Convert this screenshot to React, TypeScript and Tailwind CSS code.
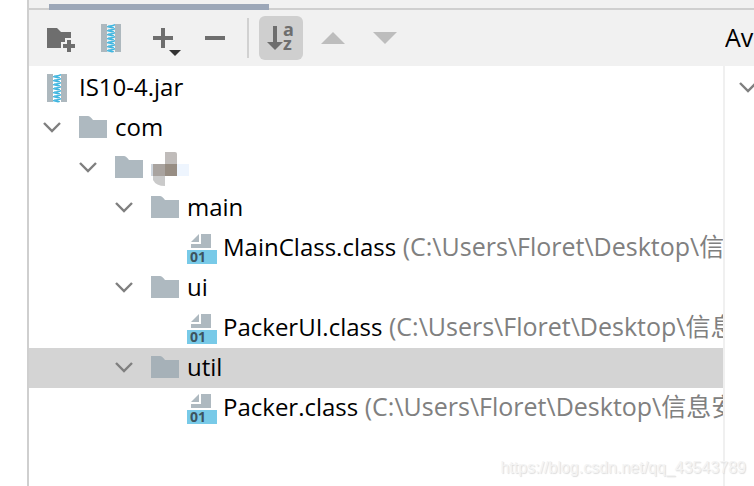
import type { ReactNode } from "react";

type IconName = "jar" | "folder" | "class";

interface TreeRow {
  depth: number;
  icon: IconName;
  name: string;
  path?: string;
  open?: boolean;
  masked?: boolean;
  selected?: boolean;
}

const rows: TreeRow[] = [
  { depth: 0, icon: "jar", name: "IS10-4.jar" },
  { depth: 0, icon: "folder", name: "com", open: true },
  { depth: 1, icon: "folder", name: "package", open: true, masked: true },
  { depth: 2, icon: "folder", name: "main", open: true },
  { depth: 4, icon: "class", name: "MainClass.class", path: "(C:\\Users\\Floret\\Desktop\\信息" },
  { depth: 2, icon: "folder", name: "ui", open: true },
  { depth: 4, icon: "class", name: "PackerUI.class", path: "(C:\\Users\\Floret\\Desktop\\信息" },
  { depth: 2, icon: "folder", name: "util", open: true, selected: true },
  { depth: 4, icon: "class", name: "Packer.class", path: "(C:\\Users\\Floret\\Desktop\\信息安" },
];

const zipperTeeth = [0, 4, 8, 12, 16, 20, 24];

function Icon({ children }: { children: ReactNode }) {
  return (
    <svg className="h-8 w-8 shrink-0 overflow-visible" viewBox="0 0 32 32" aria-hidden="true">
      {children}
    </svg>
  );
}

function JarShape({ x }: { x: number }) {
  return (
    <g transform={`translate(${x} 2)`}>
      <path d="M0 0h6v28H0zM14 0h6v28h-6z" fill="#adb8be" />
      {zipperTeeth.map((y) => (
        <g key={y} fill="#40b6e0">
          <path d={`M14 ${y}v1.6l-4 1.4-3-.6v-1l4-.4z`} />
          <path d={`M6 ${y + 2}l4 .4 3 .8v.8l-2 .4-5-1.2z`} />
        </g>
      ))}
    </g>
  );
}

function RowIcon({ name }: { name: IconName }) {
  if (name === "jar") {
    return (
      <Icon>
        <JarShape x={4} />
      </Icon>
    );
  }
  if (name === "folder") {
    return (
      <Icon>
        <path d="M0 4h9q2 0 5 4h14v18H0z" fill="#9aa7b0" fillOpacity="0.8" />
      </Icon>
    );
  }
  return (
    <Icon>
      <path d="M4 10l8-8v8zM14 2h10v14H4v-4h10z" fill="#aeb9c0" />
      <path d="M0 18h30v14H0z" fill="#78cae8" />
      <text x="3" y="30" className="font-['Open_Sans'] text-[14px] font-bold" fill="#3d5560">
        01
      </text>
    </Icon>
  );
}

function Chevron() {
  return (
    <svg className="h-5 w-5" viewBox="0 0 20 20" fill="none" stroke="#7f7f7f" strokeWidth="2.4" aria-hidden="true">
      <path d="M1 5l8 8 8-8" />
    </svg>
  );
}

function ToolButton({ label, active, children }: { label: string; active?: boolean; children: ReactNode }) {
  return (
    <button
      type="button"
      aria-label={label}
      aria-pressed={active}
      className={`flex h-11 w-11 shrink-0 items-center justify-center rounded-md ${active ? "bg-[#cfcfcf]" : ""}`}
    >
      <Icon>{children}</Icon>
    </button>
  );
}

function Toolbar() {
  return (
    <div className="flex h-14 items-center justify-between bg-[#f1f1f1] pl-2">
      <div className="flex items-center gap-2">
        <ToolButton label="New folder">
          <path d="M4 6h10l4 4h10v6h-6v4h-4v6H4z" fill="#6e6e6e" />
          <path d="M24 18h4v4h4v4h-4v4h-4v-4h-4v-4h4z" fill="#6e6e6e" />
        </ToolButton>
        <ToolButton label="New archive">
          <JarShape x={6} />
        </ToolButton>
        <ToolButton label="Add">
          <path d="M14 6h4v8h8v4h-8v8h-4v-8H6v-4h8z" fill="#6e6e6e" />
          <path d="M22 28h12l-6 6z" fill="#333" />
        </ToolButton>
        <ToolButton label="Remove">
          <path d="M6 14h20v4H6z" fill="#6e6e6e" />
        </ToolButton>
        <div className="mx-0.5 h-10 w-0.5 bg-[#d1d1d1]" />
        <ToolButton label="Sort by name" active>
          <path d="M8 4h4v16h6l-8 8-8-8h6z" fill="#6e6e6e" />
          <text x="18" y="14" className="font-['Open_Sans'] text-[18px] font-bold" fill="#6e6e6e">
            a
          </text>
          <text x="18" y="28" className="font-['Open_Sans'] text-[18px] font-bold" fill="#6e6e6e">
            z
          </text>
        </ToolButton>
        <ToolButton label="Move up">
          <path d="M4 22l12-12 12 12z" fill="#bdbdbd" />
        </ToolButton>
        <ToolButton label="Move down">
          <path d="M4 10h24l-12 12z" fill="#bdbdbd" />
        </ToolButton>
      </div>
      <h2 className="w-[29px] overflow-hidden pb-0.5 text-[25px] whitespace-nowrap">Av</h2>
    </div>
  );
}

function Row({ row }: { row: TreeRow }) {
  return (
    <li
      role="treeitem"
      aria-expanded={row.open}
      aria-selected={row.selected ?? false}
      className={`flex h-10 items-center overflow-hidden whitespace-nowrap ${row.selected ? "bg-[#d4d4d4]" : ""}`}
      style={{ paddingLeft: 14 + row.depth * 36 }}
    >
      {row.open && (
        <button type="button" aria-label={`Collapse ${row.name}`} className="w-9 shrink-0">
          <Chevron />
        </button>
      )}
      <RowIcon name={row.icon} />
      {row.masked ? (
        <svg className="ml-1 h-9 w-10" viewBox="0 0 40 36" aria-hidden="true">
          <path d="M14 2h10q2 0 2 2v10H14z" fill="#c0bcba" />
          <path d="M0 14h2v12H0z" fill="#cfd6de" />
          <path d="M2 14h12v12H2z" fill="#a9a39f" />
          <path d="M14 14h12v12H14z" fill="#978d83" />
          <path d="M26 14h12v12H26z" fill="#eef5fe" />
          <path d="M2 26h12v10q-9 0-12-6z" fill="#cacaca" />
        </svg>
      ) : (
        <span className="ml-1 pb-0.5">
          {row.name}
          {row.path && <span className="text-[25px] leading-none text-[#808080]"> {row.path}</span>}
        </span>
      )}
    </li>
  );
}

export default function App() {
  return (
    <div className="relative flex min-h-screen overflow-hidden bg-white pl-[27px] font-['Open_Sans','Noto_Sans_CJK_SC',sans-serif] text-[24px] leading-8 text-black">
      <div className="flex min-w-0 flex-1 flex-col border-l-2 border-[#cfcfcf]">
        <div className="grid h-2.5 shrink-0 bg-[#f1f1f1]">
          <div className="col-start-1 row-start-1 border-b-2 border-[#cfcfcf]" />
          <div className="col-start-1 row-start-1 ml-5 h-1.5 w-[220px] self-end bg-[#9ca7b8]" />
        </div>
        <Toolbar />
        <div className="flex flex-1">
          <ul role="tree" aria-label="Output layout" className="min-w-0 flex-1 pt-0.5">
            {rows.map((row, i) => (
              <Row key={i} row={row} />
            ))}
          </ul>
          <div className="w-[31px] shrink-0 overflow-hidden border-l-2 border-[#f0f0f0] pt-3 pl-3.5">
            <button type="button" aria-label="Collapse elements" className="block w-5">
              <Chevron />
            </button>
          </div>
        </div>
      </div>
      <p className="absolute right-2 bottom-1.5 font-['Liberation_Sans',sans-serif] text-[16px] leading-6 text-[#f4f4f4] [text-shadow:1px_1px_1px_#dcdcdc]">
        https://blog.csdn.net/qq_43543789
      </p>
    </div>
  );
}
